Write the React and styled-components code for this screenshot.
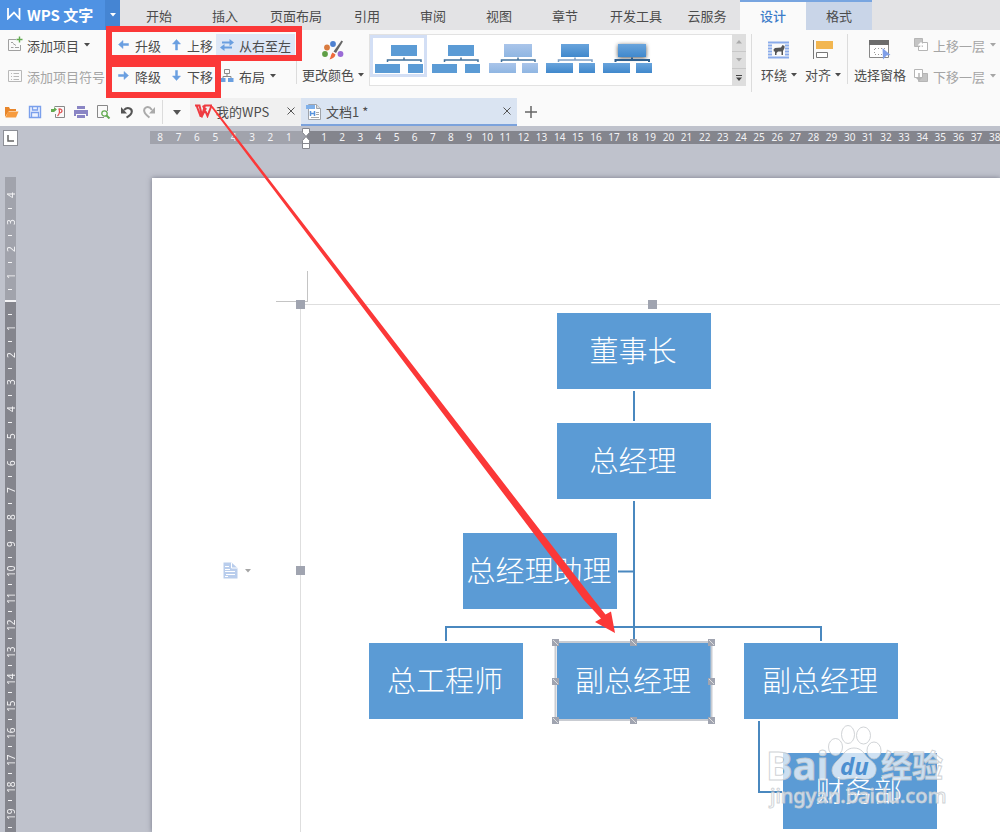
import React from 'react';
import styled, { createGlobalStyle, css } from 'styled-components';

const GlobalStyle = createGlobalStyle`
  * {
    box-sizing: border-box;
  }
  body {
    margin: 0;
    overflow: hidden;
    color: #4c4c4c;
    font-family: "Noto Sans CJK SC", sans-serif;
    font-size: 13px;
  }
  button {
    padding: 0;
    border: 0;
    background: none;
    color: inherit;
    font: inherit;
    white-space: nowrap;
    cursor: pointer;
  }
  svg {
    display: block;
    flex-shrink: 0;
  }
`;

const Shell = styled.div`
  position: relative;
  display: flex;
  flex-direction: column;
  height: 100vh;
  overflow: hidden;
  background: #bfc2cc;
`;

/* ---------- menu tabs ---------- */

const MenuBar = styled.header`
  display: flex;
  flex-shrink: 0;
  height: 30px;
  background: #e3e3e5;
`;

const Brand = styled.div`
  display: flex;
  flex-shrink: 0;
  align-items: center;
  gap: 6px;
  width: 105px;
  padding: 0 0 2px 7px;
  background: #4f92e3;
  color: #fff;
  font-size: 15px;
  font-weight: 700;
  white-space: nowrap;
`;

const BrandMenu = styled.button`
  display: flex;
  flex-shrink: 0;
  align-items: center;
  justify-content: center;
  width: 15px;
  background: #4585d3;
  color: #fff;
`;

const MenuTabs = styled.nav`
  display: flex;
  padding-left: 6px;
`;

const MenuTab = styled.button`
  min-width: 66px;
  padding: 0 12px;
  border-top: 2px solid transparent;
  line-height: 26px;
  ${({ $contextual }) => $contextual && css`
    border-top-color: #78a5e0;
    background: #c9d5e8;
  `}
  ${({ $active }) => $active && css`
    background: #fafafa;
    color: #3d7cc9;
    font-weight: 500;
  `}
`;

/* ---------- ribbon ---------- */

const Ribbon = styled.section`
  display: flex;
  flex-shrink: 0;
  align-items: flex-start;
  height: 68px;
  padding-left: 4px;
  background: #fafafa;
`;

const CommandGrid = styled.div`
  display: grid;
  flex-shrink: 0;
  grid-template-columns: ${({ $columns }) => $columns};
  grid-auto-rows: 31px;
  align-items: center;
`;

const Command = styled.button`
  display: flex;
  align-items: center;
  gap: 5px;
  height: 23px;
  padding: 0 4px 1px;
  color: ${({ $muted }) => ($muted ? '#a5a5a5' : '#4c4c4c')};
  background: ${({ $pressed }) => ($pressed ? '#dde7f6' : 'transparent')};
`;

const Separator = styled.span`
  flex-shrink: 0;
  width: 1px;
  height: ${({ $tall }) => ($tall ? 58 : 50)}px;
  margin: 4px ${({ $gap }) => $gap}px 0;
  background: #dcdcdc;
`;

const BigButton = styled.button`
  display: flex;
  flex-direction: column;
  flex-shrink: 0;
  align-items: center;
  gap: 3px;
  padding: 8px 4px 0;
`;

const BigLabel = styled.span`
  display: flex;
  align-items: center;
  gap: 4px;
  line-height: 24px;
`;

const Gallery = styled.div`
  display: flex;
  flex: 0 0 377px;
  height: 52px;
  margin: 4px 0 0 1px;
  border: 1px solid #e2e2e2;
  border-right: 0;
  background: #fff;
`;

const GalleryItem = styled.button`
  width: 57px;
  height: 42px;
  padding: 5px 1px 0 2px;
  border: 3px solid ${({ $selected }) => ($selected ? '#d3dff5' : 'transparent')};
`;

const GalleryScroll = styled.div`
  display: grid;
  grid-template-rows: repeat(3, 1fr);
  gap: 1px;
  width: 14px;
  margin: -1px 0 -1px auto;
  background: #c8c8c8;
`;

const ScrollButton = styled.button`
  display: flex;
  align-items: center;
  justify-content: center;
  background: #dedede;
  color: ${({ $dark }) => ($dark ? '#444' : '#aaa')};
`;

/* ---------- quick access and document tabs ---------- */

const QuickBar = styled.div`
  display: flex;
  flex-shrink: 0;
  height: 28px;
  background: #fafafa;
`;

const QuickButton = styled.button`
  display: flex;
  flex-shrink: 0;
  align-items: center;
  justify-content: center;
  width: ${({ $wide }) => ($wide ? 27 : 23)}px;
`;

const QuickDivider = styled.span`
  width: 1px;
  margin: 2px 0 2px 1px;
  background: #dcdcdc;
`;

const DocTab = styled.div`
  display: flex;
  align-items: center;
  width: ${({ $active }) => ($active ? 216 : 111)}px;
  padding: 0 5px;
  border-bottom: 2px solid ${({ $active }) => ($active ? '#7ba2dc' : '#f0f0f0')};
  background: ${({ $active }) => ($active ? '#dae4f2' : '#f0f0f0')};
`;

const DocName = styled.button`
  display: flex;
  flex: 1;
  align-items: center;
  gap: 4px;
`;

/* ---------- rulers ---------- */

const RulerRow = styled.div`
  display: flex;
  flex-shrink: 0;
  align-items: flex-start;
  height: 51px;
  padding: 4px 0 0 3px;
`;

const TabStop = styled.button`
  display: flex;
  flex-shrink: 0;
  align-items: center;
  justify-content: center;
  width: 15px;
  height: 16px;
  margin-right: 132px;
  border: 1px solid #8d8f96;
  background: #fff;
`;

const rulerText = css`
  color: #f4f4f6;
  font-family: "Noto Sans", sans-serif;
  font-size: 10px;
`;

const RulerMargin = styled.div`
  ${rulerText}
  display: flex;
  flex: 0 0 157px;
  height: 13px;
  margin-top: 1px;
  padding: 0 9px 0 1px;
  background: #a1a3ac;
  line-height: 13px;
`;

const RulerBody = styled(RulerMargin)`
  position: relative;
  flex: 1 0 0;
  margin-right: -4px;
  padding: 0 0 0 8px;
  background: #84858d;
`;

const RulerNumber = styled.span`
  flex: 1 0 0;
  width: 0;
  text-align: center;
`;

const IndentMarker = styled.svg`
  position: absolute;
  top: -3px;
  left: -6px;
`;

const Workspace = styled.main`
  display: flex;
  flex: 1;
  min-height: 0;
  padding-left: 5px;
`;

const SideRuler = styled.div`
  flex-shrink: 0;
  width: 11px;
  background: #84858d;
`;

const SideMargin = styled.div`
  padding: 11px 0 4px;
  border-bottom: 2px solid #f4f4f6;
  background: #a1a3ac;
`;

const SideBody = styled.div`
  padding-top: 6px;
`;

const SideNumber = styled.div`
  ${rulerText}
  display: flex;
  align-items: center;
  justify-content: center;
  width: 11px;
  height: 14px;
  line-height: 14px;
  writing-mode: vertical-rl;
  transform: rotate(180deg);
`;

const SideTick = styled.div`
  height: 13px;
  padding: 6px 4px 0 3px;

  &::after {
    display: block;
    height: 1px;
    background: #f4f4f6;
    content: "";
  }
`;

/* ---------- page and diagram ---------- */

const Page = styled.article`
  position: relative;
  flex: 1;
  margin: 1px 0 0 136px;
  background: #fff;
  box-shadow: 0 0 5px rgba(70, 72, 90, 0.6);
`;

const CropMark = styled.span`
  position: absolute;
  top: 93px;
  left: 124px;
  width: 32px;
  height: 31px;
  border: solid #c4c4c4;
  border-width: 0 1px 1px 0;
`;

const DrawingFrame = styled.div`
  position: absolute;
  top: 126px;
  right: 0;
  bottom: 0;
  left: 148px;
  border: solid #dedede;
  border-width: 1px 0 0 1px;
`;

const FrameHandle = styled.span`
  position: absolute;
  top: ${({ $y }) => $y - 5}px;
  left: ${({ $x }) => $x - 5}px;
  width: 9px;
  height: 9px;
  background: #a0a4b0;
`;

const Connectors = styled.svg`
  position: absolute;
  top: 0;
  left: 0;
`;

const OrgNode = styled.div`
  position: absolute;
  top: ${({ $y }) => $y}px;
  left: ${({ $x }) => $x}px;
  display: flex;
  align-items: center;
  justify-content: center;
  width: 154px;
  height: 76px;
  padding: 0 2px 4px 0;
  background: #5b9bd5;
  color: #fff;
  font-size: 29px;
  font-weight: 300;
  white-space: nowrap;
`;

const Selection = styled.svg`
  position: absolute;
  top: -5px;
  left: -6px;
  overflow: visible;
`;

const LayoutOptions = styled.button`
  position: absolute;
  top: 384px;
  left: 71px;
  display: flex;
  align-items: center;
  gap: 7px;
  color: #a5a5a5;
`;

const Watermark = styled.svg`
  position: absolute;
  top: 542px;
  left: 612px;
`;

const Annotation = styled.svg`
  position: absolute;
  top: 0;
  left: 0;
  pointer-events: none;
`;

/* ---------- icons ---------- */

const Caret = () => (
  <svg width="6" height="4" viewBox="0 0 6 4" aria-hidden="true">
    <path d="M0 0h6L3 3.500z" fill="currentColor" />
  </svg>
);

const CloseIcon = () => (
  <svg width="10" height="10" viewBox="0 0 10 10" fill="none" stroke="#555">
    <path d="M1.500 1.500l7 7M8.500 1.500l-7 7" />
  </svg>
);

const arrows = {
  left: 'M2.500 6.500l4.500-4v3h5.500v2H7v3z',
  right: 'M12.500 6.500L8 2.500v3H2.500v2H8v3z',
  up: 'M8.500 1.500l4 4.500h-3v6h-2V6h-3z',
  down: 'M8.500 11.500l4-4.500h-3V1.500h-2V7h-3z',
};

const ArrowIcon = ({ direction }) => (
  <svg width="14" height="14" viewBox="0 0 14 14">
    <path d={arrows[direction]} fill="#6a9fe0" stroke="#6a9fe0" strokeWidth="0.500" />
  </svg>
);

const SwapIcon = () => (
  <svg width="14" height="14" viewBox="0 0 14 14" fill="#6a9fe0">
    <path d="M14 4.500L9.500 1v2.500H2v2h7.500V8zM0 9.500L4.500 6v2.500H12v2H4.500V13z" />
  </svg>
);

const AddItemIcon = () => (
  <svg width="14" height="14" viewBox="0 0 14 14" overflow="visible" fill="none" stroke="#a0a0a0">
    <path d="M8 1.500H.5v11h12V7M3 4.500h2M3 9.500h2.500M7 9.500h4M5 5.500l3 2" />
    <path d="M11.500-1.500v6M8.500 1.500h6" stroke="#63aa50" strokeWidth="1.400" />
  </svg>
);

const BulletIcon = () => (
  <svg width="14" height="14" viewBox="0 0 14 14" fill="none" stroke="#b8b8b8">
    <path d="M.5 1.500h13v11H.5zM3 4.500h1M5.500 4.500H11M3 7.500h1M5.500 7.500H11M3 10.500h1M5.500 10.500H11" />
  </svg>
);

const LayoutIcon = () => (
  <svg width="14" height="14" viewBox="0 0 14 14" fill="none" stroke="#8a8a8a">
    <path d="M4.500 .5h5v4h-5zM7 4.500v3M3 10V7.500h8V10" />
    <path d="M0 9h5.500v4H0zM8 9h5.500v4H8z" fill="#6a9fe0" stroke="none" />
  </svg>
);

const ColorsIcon = () => (
  <svg width="22" height="22" viewBox="0 0 22 22">
    <circle cx="3" cy="16" r="2.900" fill="#5f9e45" />
    <circle cx="5" cy="9.500" r="2.900" fill="#d97b3f" />
    <circle cx="11" cy="6" r="2.900" fill="#4d80d0" />
    <circle cx="18.500" cy="16" r="2.900" fill="#9a6bd6" />
    <path d="M19.500 2.500l1.500 1-7 11.500-2.500-1.500z" fill="#666" />
    <path d="M10.500 14.500l3 2c-.5 3-3 4-6 5 1.500-2 1-5 3-7z" fill="#ee6a3c" />
  </svg>
);

const WrapIcon = () => (
  <svg width="22" height="22" viewBox="0 0 22 22">
    <path d="M0 4.500h21M0 7.500h4M0 10.500h4M0 13.500h4M0 16.500h4M17 7.500h4M17 10.500h4M17 13.500h4M17 16.500h4M0 19.500h21" stroke="#8aabea" strokeWidth="2" />
    <path d="M5.500 11.500L7 10l6-.5L14.500 7l2 1v2l-1.500 3v4h-1.500v-3.500H10L8.500 15v2H7v-4l-1 1z" fill="#555" />
  </svg>
);

const AlignIcon = () => (
  <svg width="22" height="22" viewBox="0 0 22 22">
    <path d="M1.500 2v19" stroke="#777" />
    <path d="M4 3h17v8H4z" fill="#f2b650" />
    <path d="M4.500 14.500h11v5h-11z" fill="#fff" stroke="#777" />
  </svg>
);

const PaneIcon = () => (
  <svg width="22" height="22" viewBox="0 0 22 22">
    <path d="M.5 3.500h19v16H.5z" fill="#fff" stroke="#888" />
    <path d="M0 2h20v5H0z" fill="#6c6c6c" />
    <path d="M6 10.500h10M5.500 11v6M6 16.500h8" stroke="#999" strokeDasharray="1 2" />
    <path d="M13.500 10l8 7-4 .5-3.500 4z" fill="#7f9fe8" />
  </svg>
);

const OrderIcon = ({ back }) => (
  <svg width="14" height="14" viewBox="0 0 14 14" stroke="#b5b5b5">
    <path d="M4.500 4.500h9v8h-9z" fill={back ? '#c4c4c4' : '#fff'} />
    <path d="M.5 .5h8v8h-8z" fill={back ? '#fff' : '#c4c4c4'} />
    <path d={back ? 'M5 4v7M2.500 8.500L5 11l2.500-2.500' : 'M7 11V5M4.500 7.500L7 5l2.500 2.500'} fill="none" stroke={back ? '#b5b5b5' : '#fff'} strokeWidth="1.500" />
  </svg>
);

const thumbStyles = [
  { fill: '#5b9bd5', line: '#41719c' },
  { fill: '#5b9bd5', line: '#41719c' },
  { fill: 'url(#pale)', line: '#41719c', grow: 1 },
  { fill: 'url(#bright)', line: '#7d9fc4', grow: 1 },
  { fill: 'url(#bright)', line: '#2f5f8d', grow: 1, shadow: true },
];

const OrgThumb = ({ fill, line, grow = 0, shadow }) => (
  <svg width="50" height="34" viewBox="0 0 50 34" overflow="visible">
    <defs>
      <linearGradient id="pale" x2="0" y2="1">
        <stop stopColor="#aac5ea" />
        <stop offset="1" stopColor="#8fb6e2" />
      </linearGradient>
      <linearGradient id="bright" x2="0" y2="1">
        <stop stopColor="#69a4dc" />
        <stop offset="1" stopColor="#4088cc" />
      </linearGradient>
    </defs>
    <g style={shadow ? { filter: 'drop-shadow(0 1px 2px #555)' } : undefined}>
      <rect x={16 - grow} y={2 - grow} width={26 + 2 * grow} height={11 + 2 * grow} fill={fill} />
    </g>
    <path d="M29 14.500V17.500M12.500 19V17H46V19" fill="none" stroke={line} strokeWidth={shadow ? 2 : 1.500} />
    <rect x={0} y={21 - grow} width={25 + 2 * grow} height={9 + grow} fill={fill} />
    <rect x={33} y={21 - grow} width={15 + grow} height={9 + grow} fill={fill} />
  </svg>
);

const quickIcons = [
  ['打开', <><path d="M0 12V2h4l1 2h6v2H4z" fill="#e8862b" /><path d="M3 6.500h10.500L11 12.500H.5z" fill="#f79b3e" /></>],
  ['保存', <><path d="M1.500 1.500h11v11h-11z" fill="#eef3ff" stroke="#7ba0ec" strokeWidth="1.400" /><path d="M4.500 1.500v3.500h5V1.500M3.500 12.500v-5h7v5" fill="none" stroke="#7ba0ec" strokeWidth="1.300" /></>],
  ['输出为PDF', <><path d="M4.500 1.500h9v11h-9V9M3.500 1.500h2" fill="none" stroke="#888" /><path d="M0 4h3V2l3 2.500L3 7H0z" fill="#63aa50" /><path d="M6.500 11c2-2 2.500-4 1.500-7 4-.5 4 4 0 4" fill="none" stroke="#e05252" strokeWidth="1.200" /></>],
  ['打印', <path d="M3 1h8v3H3zM0 5h14v6h-2V9H2v2H0zM3 10h8v3H3z" fill="#8a85c4" />],
  ['打印预览', <><path d="M7 12.500H.5V.5h10V6" fill="none" stroke="#888" /><circle cx="7.500" cy="8.500" r="2.700" fill="none" stroke="#63aa50" strokeWidth="1.300" /><path d="M9.500 10.500l3 3" stroke="#63aa50" strokeWidth="2" /></>],
  ['撤销', <><path d="M4 5c4-4 9-1 7.500 3C11 10 9 11 6.500 12.500" fill="none" stroke="#555" strokeWidth="2" /><path d="M1 2v6.500h6z" fill="#555" /></>],
  ['恢复', <><path d="M9 5C5-.5 0 3 1.500 7c.5 2 2.500 3.500 5 5.500" fill="none" stroke="#aaa" strokeWidth="2" /><path d="M12 2v6.500H6z" fill="#aaa" /></>],
];

const menuTabs = ['开始', '插入', '页面布局', '引用', '审阅', '视图', '章节', '开发工具', '云服务'];

const orgNodes = [
  { label: '董事长', x: 405, y: 135 },
  { label: '总经理', x: 405, y: 245 },
  { label: '总经理助理', x: 311, y: 355 },
  { label: '总工程师', x: 217, y: 465 },
  { label: '副总经理', x: 405, y: 465, selected: true },
  { label: '副总经理', x: 592, y: 465 },
  { label: '财务部', x: 631, y: 575 },
];

const range = (from, to) => Array.from({ length: to - from + 1 }, (_, i) => from + i);

const NodeSelection = () => (
  <Selection width="166" height="86">
    <rect x="4.500" y="4" width="156" height="78" fill="none" stroke="#c9ccd2" strokeWidth="2" />
    {[4, 82, 160].map((x) => [4, 43, 82].map((y) => (x === 82 && y === 43 ? null : (
      <g key={`${x}-${y}`}>
        <rect x={x - 3} y={y - 3} width="7" height="7" fill="#a0a4b0" />
        <path d={`M${x - 2} ${y - 2}l5 5`} stroke="#ddd" />
      </g>
    ))))}
  </Selection>
);

const BaiduMark = () => (
  <Watermark width="190" height="95" viewBox="0 0 190 95" fill="#fff" fillOpacity="0.700" stroke="#c4c8cc" strokeOpacity="0.800" fontWeight="700">
    <ellipse cx="84" cy="14.500" rx="6.500" ry="9" />
    <ellipse cx="99.500" cy="15.500" rx="7" ry="8.500" />
    <ellipse cx="71.500" cy="27" rx="7" ry="8.500" />
    <ellipse cx="110" cy="30.500" rx="7" ry="8.500" />
    <path d="M90 28c8 0 10 6 14 10 5 4 9 7 8 13-1 8-9 9-14 8-5-1-11-1-16 0-5 1-13 0-14-8 0-6 4-9 8-13 4-4 6-10 14-10z" />
    <text x="2" y="60" fontFamily="Noto Sans, sans-serif" fontSize="40">Bai</text>
    <text x="76" y="55" fontFamily="Noto Sans, sans-serif" fontSize="24" fontStyle="italic" fill="#4c8fd0" fillOpacity="1" stroke="none">du</text>
    <text x="117" y="57" fontFamily="Noto Sans CJK SC, sans-serif" fontSize="31">经验</text>
    <text x="6" y="83" fontFamily="Noto Sans, sans-serif" fontSize="20" fontWeight="500">jingyan.baidu.com</text>
  </Watermark>
);

const App = () => {
  return (
    <Shell>
      <GlobalStyle />
      <MenuBar>
        <Brand>
          <svg width="14" height="12" viewBox="0 0 14 12" fill="none" stroke="#fff" strokeWidth="1.800">
            <path d="M1 0v10.500l6-6 5.500 6V0" />
          </svg>
          WPS 文字
        </Brand>
        <BrandMenu aria-label="菜单"><Caret /></BrandMenu>
        <MenuTabs>
          {menuTabs.map((name) => <MenuTab key={name}>{name}</MenuTab>)}
          <MenuTab $contextual $active>设计</MenuTab>
          <MenuTab $contextual>格式</MenuTab>
        </MenuTabs>
      </MenuBar>

      <Ribbon>
        <CommandGrid $columns="108px 52px 52px 79px">
          <Command><AddItemIcon />添加项目<Caret /></Command>
          <Command><ArrowIcon direction="left" />升级</Command>
          <Command><ArrowIcon direction="up" />上移</Command>
          <Command $pressed><SwapIcon />从右至左</Command>
          <Command $muted><BulletIcon />添加项目符号</Command>
          <Command><ArrowIcon direction="right" />降级</Command>
          <Command><ArrowIcon direction="down" />下移</Command>
          <Command><LayoutIcon />布局<Caret /></Command>
        </CommandGrid>
        <Separator $gap={1} />
        <BigButton>
          <ColorsIcon />
          <BigLabel>更改颜色<Caret /></BigLabel>
        </BigButton>
        <Gallery>
          {thumbStyles.map((thumb, i) => (
            <GalleryItem key={i} $selected={i === 0} aria-label={`样式 ${i + 1}`}>
              <OrgThumb {...thumb} />
            </GalleryItem>
          ))}
          <GalleryScroll>
            <ScrollButton aria-label="上一行">
              <svg width="6" height="4"><path d="M0 3.500h6L3 0z" fill="currentColor" /></svg>
            </ScrollButton>
            <ScrollButton aria-label="下一行"><Caret /></ScrollButton>
            <ScrollButton $dark aria-label="更多">
              <svg width="6" height="6"><path d="M0 0h6v1H0zM0 2.500h6L3 6z" fill="currentColor" /></svg>
            </ScrollButton>
          </GalleryScroll>
        </Gallery>
        <Separator $tall $gap={5} />
        <BigButton>
          <WrapIcon />
          <BigLabel>环绕<Caret /></BigLabel>
        </BigButton>
        <BigButton>
          <AlignIcon />
          <BigLabel>对齐<Caret /></BigLabel>
        </BigButton>
        <Separator $gap={2} />
        <BigButton>
          <PaneIcon />
          <BigLabel>选择窗格</BigLabel>
        </BigButton>
        <CommandGrid $columns="auto">
          <Command $muted><OrderIcon />上移一层<Caret /></Command>
          <Command $muted><OrderIcon back />下移一层<Caret /></Command>
        </CommandGrid>
      </Ribbon>

      <QuickBar>
        {quickIcons.map(([name, drawing]) => (
          <QuickButton key={name} aria-label={name}>
            <svg width="14" height="14" viewBox="0 0 14 14">{drawing}</svg>
          </QuickButton>
        ))}
        <QuickDivider />
        <QuickButton $wide aria-label="自定义">
          <svg width="8" height="5" viewBox="0 0 8 5"><path d="M0 0h8L4 5z" fill="#555" /></svg>
        </QuickButton>
        <DocTab>
          <DocName>
            <svg width="17" height="14" viewBox="0 0 17 14" fill="none" stroke="#ee3b41" strokeWidth="2">
              <path d="M0 1.500h4.500L7 11.500 10 1.500h6.500L12.500 12 8 1.500M1.500 1.500L5.500 12h1.500l4-8" />
            </svg>
            我的WPS
          </DocName>
          <button aria-label="关闭我的WPS"><CloseIcon /></button>
        </DocTab>
        <DocTab $active>
          <DocName>
            <svg width="16" height="17" viewBox="0 0 16 17">
              <path d="M2.500 1.500h8l4 4v11h-12z" fill="#fff" stroke="#a0a4ab" />
              <path d="M10.500 1.500v4h4" fill="#ddd" stroke="#a0a4ab" />
              <path d="M0 2h9v4H0z" fill="#7fb0ea" />
              <path d="M4.500 8v5M8.500 8v5M4.500 10.500h4" stroke="#5a94dc" strokeWidth="1.500" />
              <path d="M10 9.500h3M10 11.500h3M5 14.500h8" stroke="#aaa" />
            </svg>
            文档1 *
          </DocName>
          <button aria-label="关闭文档1"><CloseIcon /></button>
        </DocTab>
        <QuickButton $wide aria-label="新建">
          <svg width="12" height="12" viewBox="0 0 12 12"><path d="M6 0v12M0 6h12" stroke="#666" strokeWidth="1.500" /></svg>
        </QuickButton>
      </QuickBar>

      <RulerRow>
        <TabStop aria-label="制表符">
          <svg width="7" height="7" viewBox="0 0 7 7"><path d="M1 0v6h6" fill="none" stroke="#666" strokeWidth="1.500" /></svg>
        </TabStop>
        <RulerMargin>
          {range(1, 8).reverse().map((n) => <RulerNumber key={n}>{n}</RulerNumber>)}
        </RulerMargin>
        <RulerBody>
          <IndentMarker width="10" height="21" viewBox="0 0 10 21" fill="#fff" stroke="#85868d">
            <path d="M1.500 .5h7v4L5 8.500l3.500 4v8h-7v-8L5 8.500l-3.500-4zM1.500 15.500h7" />
          </IndentMarker>
          {range(1, 38).map((n) => <RulerNumber key={n}>{n}</RulerNumber>)}
        </RulerBody>
      </RulerRow>

      <Workspace>
        <SideRuler>
          <SideMargin>
            {range(1, 4).reverse().map((n) => (
              <React.Fragment key={n}>
                <SideNumber>{n}</SideNumber>
                <SideTick />
              </React.Fragment>
            ))}
          </SideMargin>
          <SideBody>
            {range(1, 19).map((n) => (
              <React.Fragment key={n}>
                <SideTick />
                <SideNumber>{n}</SideNumber>
              </React.Fragment>
            ))}
            <SideTick />
          </SideBody>
        </SideRuler>

        <Page>
          <CropMark />
          <DrawingFrame />
          <FrameHandle $x={149} $y={127} />
          <FrameHandle $x={501} $y={127} />
          <FrameHandle $x={149} $y={393} />
          <LayoutOptions aria-label="布局选项">
            <svg width="15" height="17" viewBox="0 0 15 17">
              <path d="M.5 .5h8l6 5.500v10.500H.5z" fill="#b9cdec" />
              <path d="M8.500 .5V6h6M2 4.500h4M2 7.500h5M2 9.500h10M3 12.500h9M2 14.500h3" fill="none" stroke="#fff" />
            </svg>
            <Caret />
          </LayoutOptions>
          <Connectors width="700" height="640" fill="none" stroke="#4a88bf" strokeWidth="2">
            <path d="M482 213v30M482 323v140M466 393.500h16M294 463V449h375v14M607 543v71h23" />
          </Connectors>
          {orgNodes.map(({ label, x, y, selected }) => (
            <OrgNode key={`${x}-${y}`} $x={x} $y={y}>
              {label}
              {selected && <NodeSelection />}
            </OrgNode>
          ))}
          <BaiduMark />
        </Page>
      </Workspace>

      <Annotation width="1000" height="832" fill="none" stroke="#fb3838" strokeWidth="6">
        <rect x="109" y="29" width="190" height="29" />
        <rect x="109" y="64" width="109" height="31" />
        <path d="M211 107l1.500-1L594 600l11.500 14.500 5.500-3 4 21.500-20-11 6-3.500L584 600z" fill="#fb3838" stroke="none" />
      </Annotation>
    </Shell>
  );
};

export default App;
